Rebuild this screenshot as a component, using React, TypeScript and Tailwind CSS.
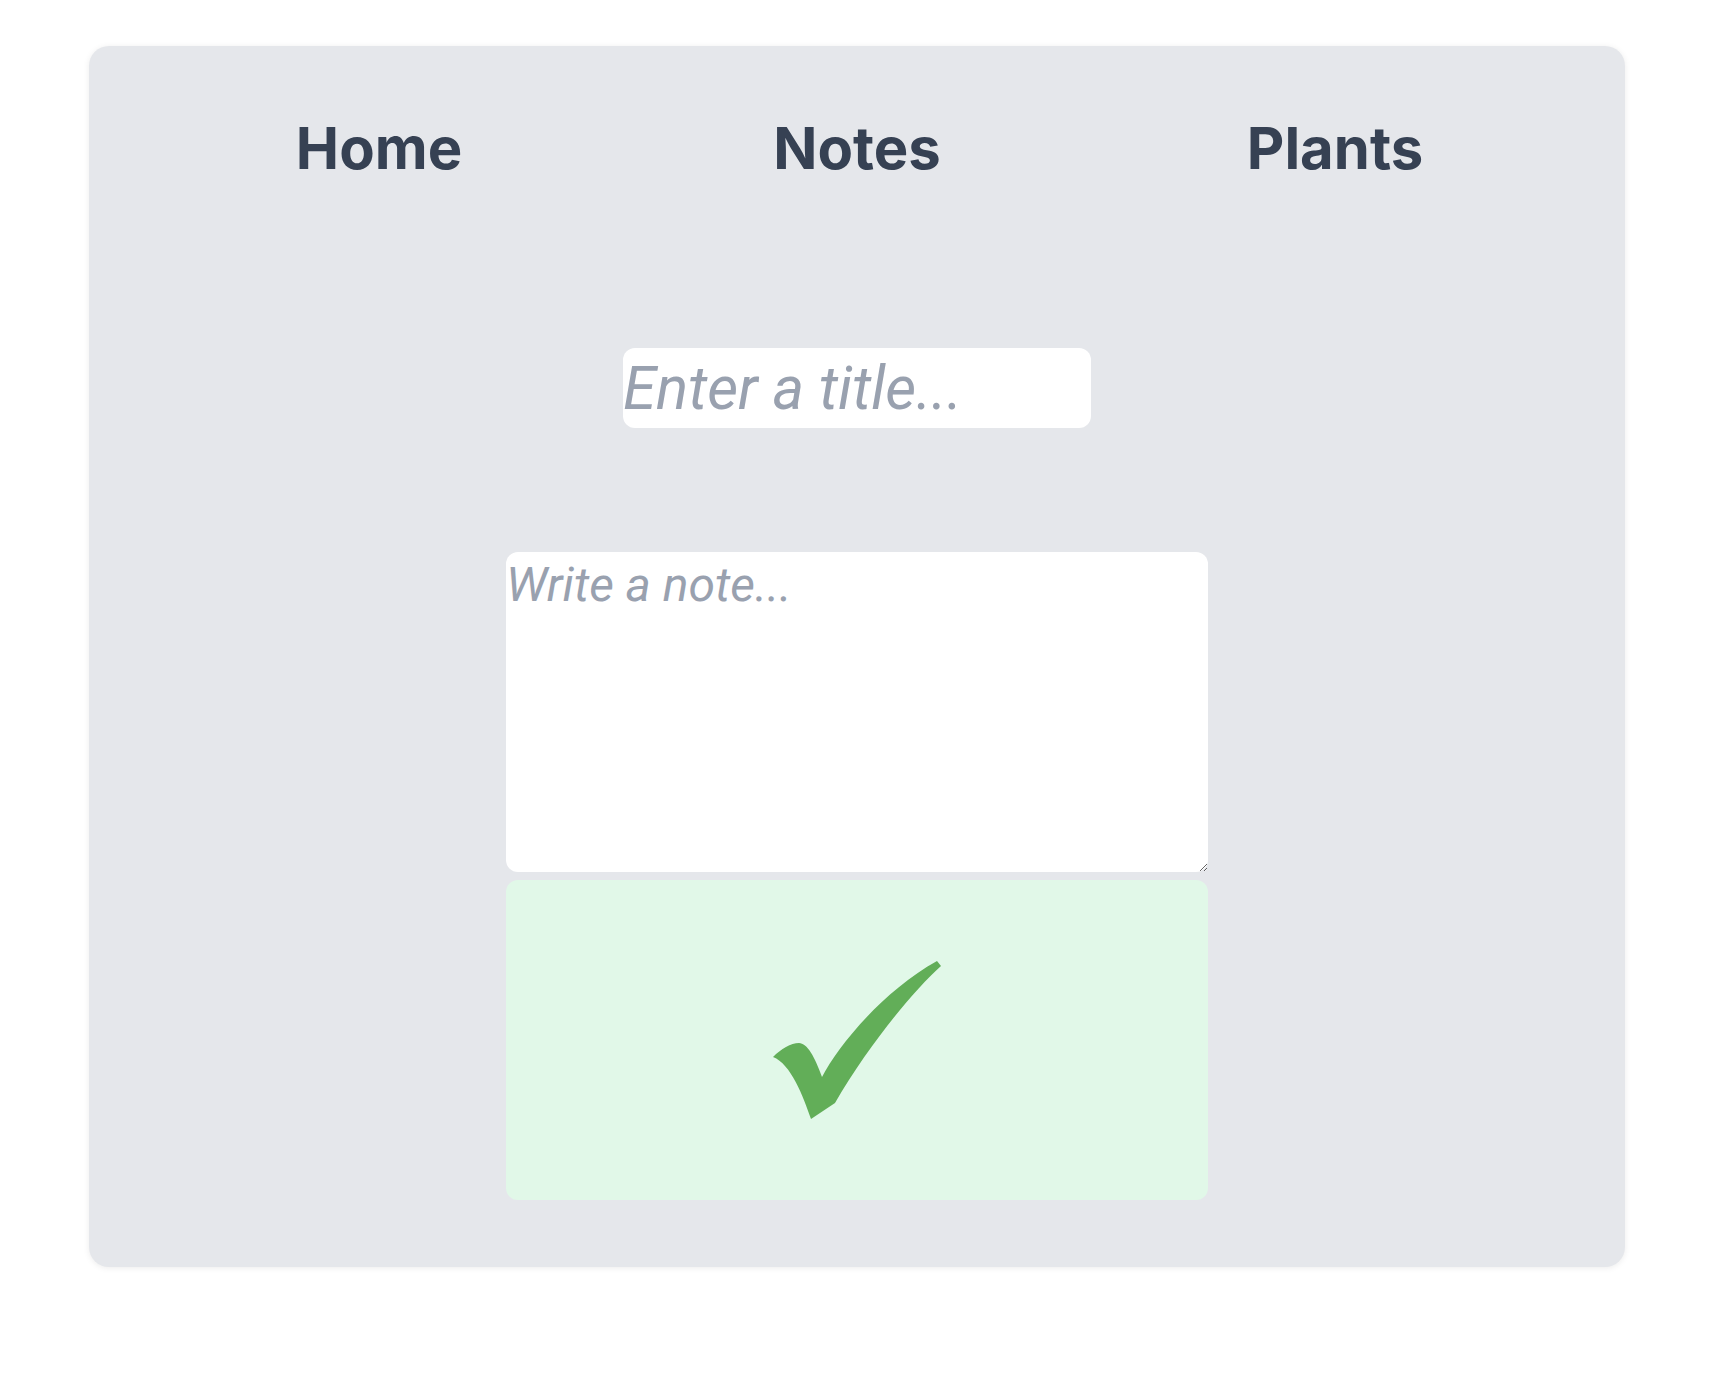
import React from "react";

function Check() {
  return (
    <svg width="168" height="158" viewBox="0 0 168 158" aria-hidden="true">
      <path
        d="M 0 96 C 8 88, 18 82, 26 82 C 34 82, 42 96, 49 116 C 65 85, 110 30, 164 0 L 168 5 C 140 30, 95 85, 62 142 L 38 158 C 30 135, 18 103, 0 96 Z"
        fill="#62ae58"
      />
    </svg>
  );
}

export default function App() {
  return (
    <div
      className="min-h-[1388px] bg-white"
      style={{ fontFamily: "Inter, 'Liberation Sans', sans-serif" }}
    >
      <div className="pt-[46px] pl-[89px]">
        <div className="w-[1536px] rounded-[20px] bg-gray-200 shadow-[0_1px_6px_rgba(0,0,0,0.08)] pt-[72px] pb-[67px]">
          <nav className="grid grid-cols-3 px-[51px] h-[60px] items-center">
            <a className="text-center text-[58px] font-bold text-gray-700 leading-none">Home</a>
            <a className="text-center text-[58px] font-bold text-gray-700 leading-none">Notes</a>
            <a className="text-center text-[58px] font-bold text-gray-700 leading-none">Plants</a>
          </nav>
          <div className="flex flex-col items-center">
            <input
              type="text"
              placeholder="Enter a title..."
              className="mt-[170px] block w-[468px] h-[80px] rounded-xl bg-white text-6xl italic text-gray-700 placeholder:text-gray-400 outline-none font-['Roboto',sans-serif]"
            />
            <textarea
              placeholder="Write a note..."
              className="mt-[124px] block w-[702px] h-[320px] rounded-xl bg-white text-5xl leading-[1.3] pt-[2px] italic text-gray-700 placeholder:text-gray-400 outline-none font-['Roboto',sans-serif]"
            />
            <button className="mt-[8px] flex w-[702px] h-[320px] items-center justify-center rounded-xl bg-[#e1f8e8]">
              <Check />
            </button>
          </div>
        </div>
      </div>
    </div>
  );
}
